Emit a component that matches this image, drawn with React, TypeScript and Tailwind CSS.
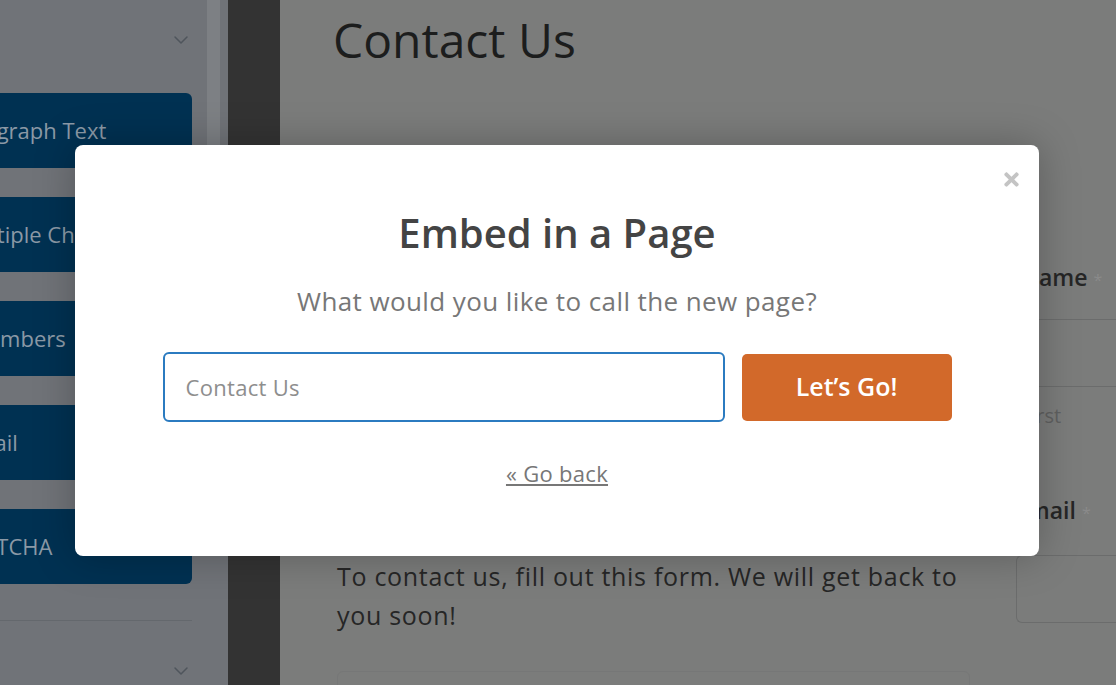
import { FaTimes } from 'react-icons/fa'
import { ChevronDown } from 'lucide-react'

// right column of the field picker, scrolled so the start of each label is cut off
const fields = [
    { label: 'Paragraph Text', shift: '-ml-[50px]' },
    { label: 'Multiple Choice', shift: '-ml-[42px]' },
    { label: 'Numbers', shift: '-ml-[30px]' },
    { label: 'Email', shift: '-ml-[38px]' },
    { label: 'reCAPTCHA', shift: '-ml-[66px]' },
]

export default function App() {
    return (
        <div className="relative flex h-[685px] w-[1116px] overflow-hidden bg-[#7b7c7b] font-['Open_Sans',sans-serif]">
            {/* field sidebar */}
            <aside className="relative flex w-[228px] shrink-0 flex-col bg-[#707378]">
                <div className="absolute right-[8px] top-0 h-[160px] w-[13px] rounded-b-full bg-[#7d8084]" />
                <div className="flex h-[93px] justify-end pr-[35px] pt-[28px]">
                    <ChevronDown size={24} strokeWidth={1.5} className="text-[#4f555c]" />
                </div>
                <div className="flex flex-col gap-[29px]">
                    {fields.map((f) => (
                        <div key={f.label} className="flex h-[75px] w-[192px] items-center overflow-hidden rounded-r-[6px] bg-[#003152]">
                            <span className={`whitespace-nowrap text-[22px] text-[#8b99a6] ${f.shift}`}>{f.label}</span>
                        </div>
                    ))}
                </div>
                <div className="mt-[36px] h-px w-[192px] bg-[#64686d]" />
                <div className="flex justify-end pr-[35px] pt-[38px]">
                    <ChevronDown size={24} strokeWidth={1.5} className="text-[#4f555c]" />
                </div>
            </aside>

            {/* dark gutter */}
            <div className="w-[52px] shrink-0 bg-[#333333]" />

            {/* form preview */}
            <main className="flex min-w-0 flex-1 flex-col pl-[53px]">
                <h1 className="mt-[8px] text-[48px] leading-[64px] text-[#1c1d1d]">Contact Us</h1>
                <div className="mt-[41px] h-px bg-[#5b5c60]" />
                <div className="flex flex-1">
                    <div className="flex w-[680px] shrink-0 flex-col pl-[4px]">
                        <p className="mt-[444px] w-[660px] text-[25px] leading-[39px] tracking-[0.7px] text-[#262626]">
                            To contact us, fill out this form. We will get back to you soon!
                        </p>
                        <div className="mt-[36px] h-[40px] w-[633px] rounded-t-[6px] border border-[#767777]" />
                    </div>
                    <div className="flex flex-1 flex-col pl-[8px]">
                        <div className="mt-[149px] h-[30px] text-[23px] font-semibold leading-[30px] text-[#262626]">
                            Name <span className="text-[16px] font-normal text-[#8a8a8a]">*</span>
                        </div>
                        <div className="-ml-[8px] mt-[27px] h-[68px] border-y border-[#6b6c6c]" />
                        <div className="mt-[16px] h-[26px] text-[20px] leading-[26px] text-[#5f6060]">First</div>
                        <div className="-ml-[6px] mt-[66px] h-[30px] text-[23px] font-semibold leading-[30px] text-[#262626]">
                            Email <span className="text-[16px] font-normal text-[#8a8a8a]">*</span>
                        </div>
                        <div className="-ml-[5px] mt-[30px] h-[68px] rounded-l-[6px] border border-r-0 border-[#6b6c6c]" />
                    </div>
                </div>
            </main>

            {/* embed modal */}
            <div className="absolute left-[75px] top-[145px] flex h-[411px] w-[964px] flex-col items-center rounded-[8px] bg-white shadow-[0_0_40px_rgba(0,0,0,0.25)]">
                <button className="absolute right-[17px] top-[24px] text-[#c4c4c4]">
                    <FaTimes size={21} />
                </button>
                <h2 className="mt-[66px] text-[40px] font-semibold leading-[44px] text-[#444444]">Embed in a Page</h2>
                <p className="mt-[31px] text-[26px] leading-[30px] tracking-[0.4px] text-[#777777]">What would you like to call the new page?</p>
                <div className="mt-[36px] flex items-center gap-[17px]">
                    <input
                        placeholder="Contact Us"
                        className="h-[70px] w-[562px] rounded-[6px] border-2 border-[#2b7bc0] px-[21px] text-[22px] tracking-[0.3px] text-[#444] outline-none placeholder:text-[#8e8e8e]"
                    />
                    <button className="h-[67px] w-[210px] rounded-[5px] bg-[#d2692a] text-[25px] font-semibold text-white">
                        Let’s Go!
                    </button>
                </div>
                <a className="mt-[37px] text-[22px] leading-[28px] tracking-[0.3px] text-[#777777] underline">« Go back</a>
            </div>
        </div>
    )
}
